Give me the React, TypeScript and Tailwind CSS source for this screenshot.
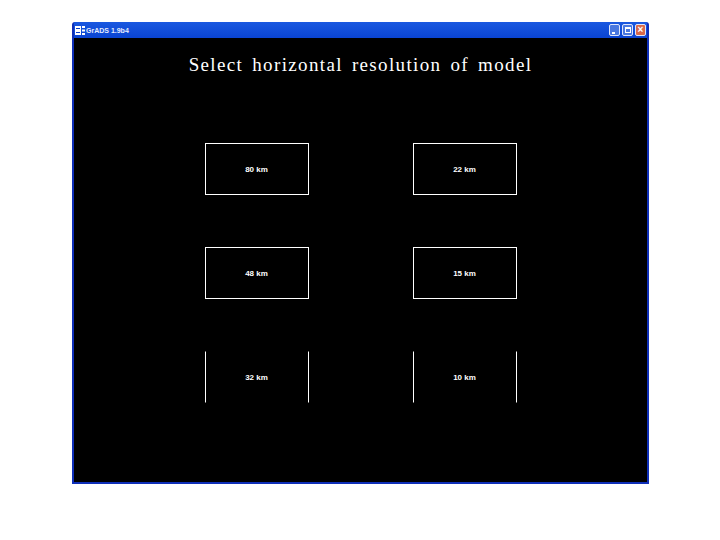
const ROWS = [
  ["80 km", "22 km"],
  ["48 km", "15 km"],
  ["32 km", "10 km"],
];

function ResButton({ label, open }: { label: string; open?: boolean }) {
  return (
    <div
      className={`flex h-[52px] w-[104px] items-center justify-center border border-white pt-[2px] text-[8px] font-bold text-white ${
        open ? "border-y-black" : ""
      }`}
    >
      {label}
    </div>
  );
}

function CaptionIcon({ children, red }: { children: React.ReactNode; red?: boolean }) {
  return (
    <div
      className={`flex h-[12px] w-[11px] items-center justify-center rounded-[2px] border border-[#dfe6fb] ${
        red ? "bg-[#d9694a]" : "bg-[#4a78e0]"
      }`}
    >
      {children}
    </div>
  );
}

export default function App() {
  return (
    <div className="h-[540px] w-[720px] overflow-hidden bg-white pl-[72px] pt-[22px] font-['Liberation_Sans',sans-serif]">
      <div className="flex h-[462px] w-[577px] flex-col rounded-t-[3px] bg-[#0f2fb8] px-[2px] pb-[2px]">
        {/* title bar */}
        <div className="flex h-[16px] items-center bg-gradient-to-b from-[#1a58e0] to-[#0a44d2] pr-[1px]">
          <svg width="10" height="9" viewBox="0 0 10 9" className="ml-[1px]">
            <rect x="0" y="0" width="6" height="9" fill="#fff" />
            <rect x="1" y="2" width="4" height="1" fill="#0a3fc8" />
            <rect x="1" y="6" width="4" height="1" fill="#0a3fc8" />
            <rect x="7" y="0" width="3" height="2" fill="#fff" />
            <rect x="7" y="3.5" width="3" height="2" fill="#fff" />
            <rect x="7" y="7" width="3" height="2" fill="#fff" />
          </svg>
          <span className="ml-[1px] pt-[2px] text-[7px] font-bold text-[#e6ecff]">GrADS 1.9b4</span>
          <div className="ml-auto flex gap-[2px]">
            <CaptionIcon>
              <div className="mt-[6px] mr-[3px] h-[2px] w-[3px] bg-white" />
            </CaptionIcon>
            <CaptionIcon>
              <div className="h-[6px] w-[6px] border border-t-2 border-white" />
            </CaptionIcon>
            <CaptionIcon red>
              <span className="text-[10px] leading-none font-bold text-white">×</span>
            </CaptionIcon>
          </div>
        </div>
        {/* graphics area */}
        <div className="flex flex-1 flex-col items-center bg-black">
          <div className="mt-[15px] h-[24px] whitespace-nowrap font-['Liberation_Serif',serif] text-[19px] leading-[24px] tracking-[1.35px] text-white [word-spacing:3px]">
            Select horizontal resolution of model
          </div>
          <div className="mt-[66px] grid grid-cols-[104px_104px] gap-x-[104px] gap-y-[52px]">
            {ROWS.flat().map((label, i) => (
              <ResButton key={label} label={label} open={i >= 4} />
            ))}
          </div>
        </div>
      </div>
    </div>
  );
}
